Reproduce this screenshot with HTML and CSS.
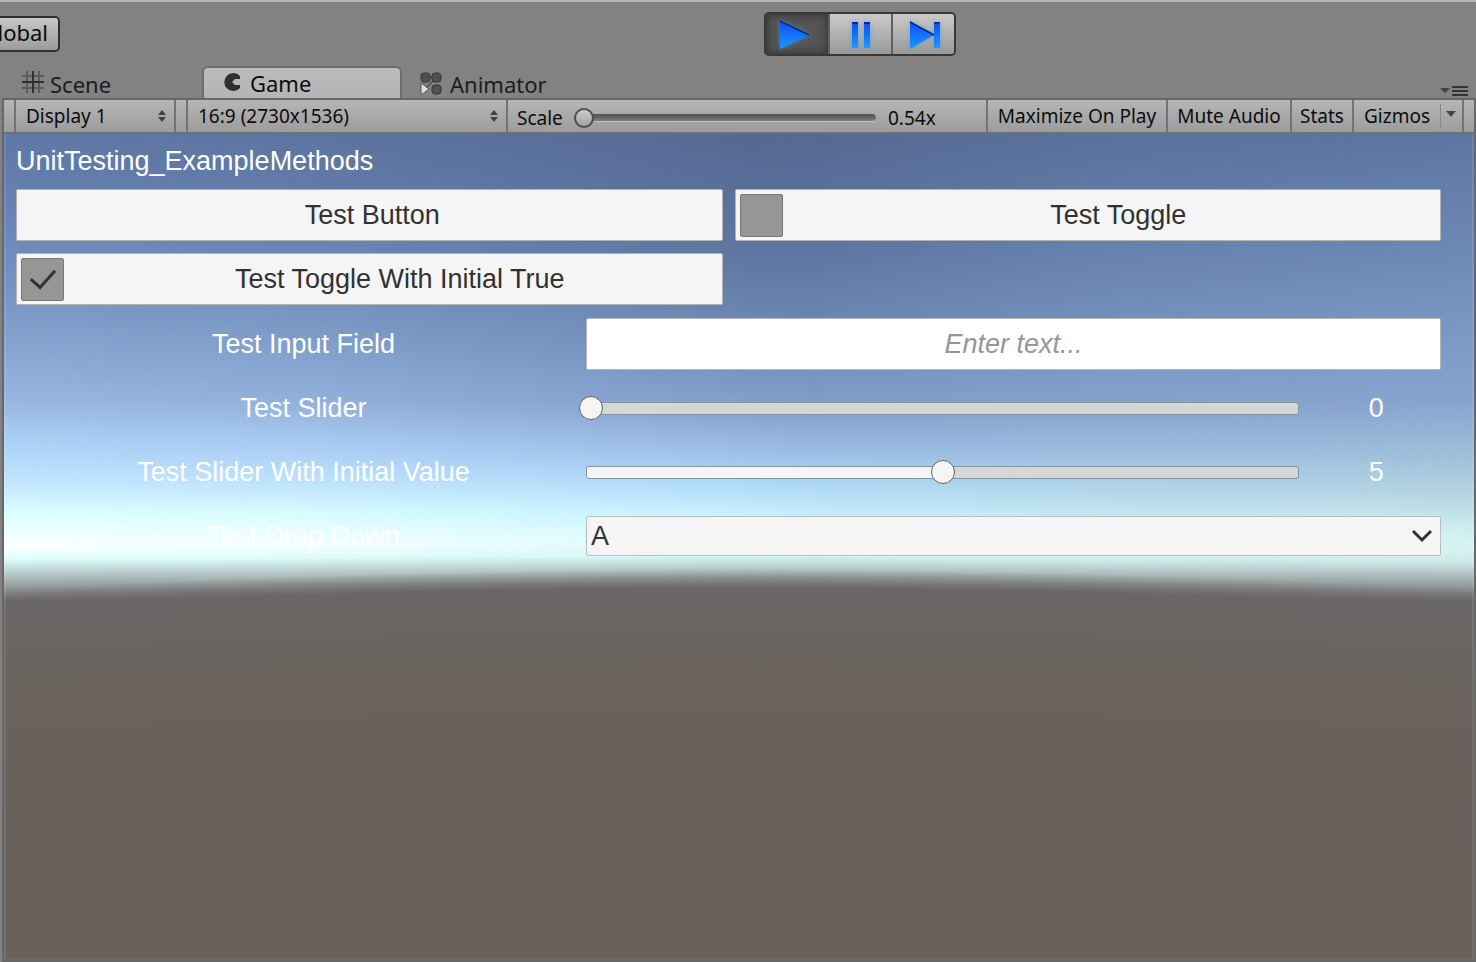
FILE: index.html
```html
<!DOCTYPE html>
<html lang="en">
<head>
<meta charset="utf-8">
<title>UnitTesting_ExampleMethods</title>
<link rel="stylesheet" href="styles.css">
</head>
<body>
<div class="editor">
  <header class="main-bar">
    <button class="pivot" type="button">Global</button>
    <div class="playback">
      <button class="play-btn is-on" type="button" aria-label="Play">
        <svg width="38" height="34" viewBox="0 0 38 34"><defs><linearGradient id="blue" x1="0" y1="0" x2="0" y2="1"><stop offset="0" stop-color="#0a4df0"/><stop offset="1" stop-color="#1a9aff"/></linearGradient></defs><path d="M2 4 31 18 2 32z" fill="url(#blue)"/><path d="M2 4 31 18" stroke="#0a2a80" stroke-width="1.5"/></svg>
      </button>
      <button class="play-btn" type="button" aria-label="Pause">
        <svg width="38" height="34" viewBox="0 0 38 34"><path d="M10 5h6v26h-6zM22 5h6v26h-6z" fill="url(#blue)"/><path d="M10 6h6M22 6h6" stroke="#0a2a80" stroke-width="2"/></svg>
      </button>
      <button class="play-btn" type="button" aria-label="Step">
        <svg width="38" height="34" viewBox="0 0 38 34"><path d="M5 4 29 18 5 32zM29 5h6v26h-6z" fill="url(#blue)"/><path d="M5 5 29 18M29 6h6" stroke="#0a2a80" stroke-width="1.5"/></svg>
      </button>
    </div>
  </header>

  <nav class="tabs">
    <button class="tab tab-scene" type="button">
      <svg width="22" height="22" viewBox="0 0 22 22" fill="none" stroke-width="2"><path d="M5 0v22M17 0v22M0 5h22M0 17h22" stroke="#5c5c5c"/><path d="M11 0v22M0 11h22" stroke="#303030"/></svg>
      Scene
    </button>
    <button class="tab tab-game" type="button">
      <svg width="18" height="18" viewBox="0 0 18 18"><path d="M16 3A9 9 0 1 0 16 15V12H11L8 9 11 6h5z" fill="#303030"/></svg>
      Game
    </button>
    <button class="tab tab-animator" type="button">
      <svg width="22" height="24" viewBox="0 0 22 24"><path d="M5 5h12M17 5 5 17" stroke="#5c5c5c" stroke-width="2"/><g fill="#505050" stroke="#333" stroke-width="1"><rect x="1" y="1" width="9" height="9" rx="3"/><rect x="12" y="1" width="9" height="9" rx="3"/><rect x="12" y="13" width="9" height="9" rx="3"/></g><path d="M1 11 9 17 1 23z" fill="#e0e0e0" stroke="#555"/></svg>
      Animator
    </button>
    <button class="tab-menu" type="button" aria-label="Tab menu">
      <svg width="28" height="12" viewBox="0 0 28 12"><path d="M0 3h10L5 8z" fill="#404040"/><path d="M12 2h16M12 6h16M12 10h16" stroke="#333" stroke-width="2"/></svg>
    </button>
  </nav>

  <main class="panel">
    <div class="view-bar">
      <div class="edge"></div>
      <label class="pick pick-display">
        <select aria-label="Display"><option>Display 1</option></select>
        <svg width="10" height="14" viewBox="0 0 10 14"><path d="M1 6 5 1l4 5zM1 8h8l-4 5z" fill="#444"/></svg>
      </label>
      <div class="edge"></div>
      <label class="pick pick-aspect">
        <select aria-label="Aspect"><option>16:9 (2730x1536)</option></select>
        <svg width="10" height="14" viewBox="0 0 10 14"><path d="M1 6 5 1l4 5zM1 8h8l-4 5z" fill="#444"/></svg>
      </label>
      <div class="scale">
        <label for="scale">Scale</label>
        <input id="scale" type="range" min="0" max="100" value="0">
        <output for="scale">0.54x</output>
      </div>
      <button class="bar-btn bar-max" type="button">Maximize On Play</button>
      <button class="bar-btn bar-mute" type="button">Mute Audio</button>
      <button class="bar-btn bar-stats" type="button">Stats</button>
      <button class="bar-btn bar-gizmos" type="button">Gizmos</button>
      <button class="bar-more" type="button" aria-label="Gizmo options"><svg width="10" height="7" viewBox="0 0 10 7"><path d="M0 0h10L5 6z" fill="#444"/></svg></button>
      <div class="edge"></div>
    </div>

    <section class="view">
      <div class="sky sky-mid"></div>
      <div class="sky sky-left"></div>
      <div class="sky sky-right"></div>
      <div class="sky ground"></div>
      <div class="form">
        <h1 class="title">UnitTesting_ExampleMethods</h1>
        <div class="buttons">
          <button class="tile tile-button" type="button">Test Button</button>
          <label class="tile"><input class="check" type="checkbox"><span>Test Toggle</span></label>
          <label class="tile"><input class="check" type="checkbox" checked><span>Test Toggle With Initial True</span></label>
        </div>
        <div class="fields">
          <label class="name" for="text">Test Input Field</label>
          <input class="text" id="text" type="text" placeholder="Enter text...">
          <label class="name" for="s0">Test Slider</label>
          <div class="slide">
            <div class="track"><input id="s0" type="range" min="0" max="10" value="0"></div>
            <output for="s0">0</output>
          </div>
          <label class="name" for="s5">Test Slider With Initial Value</label>
          <div class="slide">
            <div class="track" style="--fill:50%"><input id="s5" type="range" min="0" max="10" value="5"></div>
            <output for="s5">5</output>
          </div>
          <label class="name" for="drop">Test Drop Down</label>
          <div class="drop">
            <select id="drop"><option>A</option></select>
            <svg width="22" height="14" viewBox="0 0 22 14"><path d="M2 2 11 11 20 2" fill="none" stroke="#323232" stroke-width="3"/></svg>
          </div>
        </div>
      </div>
    </section>
  </main>
</div>
</body>
</html>
```
FILE: styles.css
```css
* { box-sizing: border-box; }
html, body { height: 100%; margin: 0; overflow: hidden; }
body { background: #828282; color: #0c0c0c; font-family: "Noto Sans", sans-serif; }
button, select, input { font: inherit; color: inherit; margin: 0; }
button { border: 0; background: none; padding: 0; }
svg { display: block; flex: none; }

.editor { display: flex; flex-direction: column; min-height: 100%; border-top: 2px solid #b4b4b4; }

.main-bar { display: flex; align-items: flex-start; height: 64px; padding-top: 10px; }
.pivot {
  width: 100px; height: 36px; margin: 4px 0 0 -40px; padding: 0 10px 4px 0; text-align: right;
  font-size: 22px; line-height: 28px; border: 2px solid #303030; border-radius: 5px;
  background: linear-gradient(#c8c8c8, #9c9c9c);
}
.playback {
  display: flex; width: 192px; height: 44px; margin-left: 704px;
  border: 2px solid #383838; border-radius: 5px; overflow: hidden;
}
.play-btn {
  flex: 1; display: grid; place-items: center;
  background: linear-gradient(#cacaca, #999);
}
.play-btn + .play-btn { border-left: 2px solid #606060; }
.play-btn.is-on { flex: 0 0 62px; background: #555; box-shadow: inset 0 0 8px 1px #333; }
.play-btn svg { filter: drop-shadow(0 0 2px #4aa0e0aa); }

.tabs { display: flex; align-items: flex-end; height: 32px; font-size: 22px; line-height: 30px; }
.tab { display: flex; align-items: center; gap: 6px; height: 32px; padding-top: 3px; color: #1c1c1c; }
.tab svg { margin-bottom: 3px; }
.tab-scene { width: 202px; padding-left: 22px; }
.tab-game {
  gap: 8px; width: 200px; padding: 0 0 0 20px; color: #0c0c0c;
  border: 2px solid #6c6c6c; border-bottom: 0; border-radius: 6px 6px 0 0;
  background: linear-gradient(#bcbcbc, #b4b4b4);
}
.tab-animator { gap: 8px; padding-left: 18px; }
.tab-animator svg { margin-bottom: 0; }
.tab-menu { margin: 0 8px 1px auto; }

.panel {
  flex: 1; display: flex; flex-direction: column; margin-left: 2px;
  border: 2px solid #686868; font-size: 19px;
}
.view-bar {
  display: flex; height: 34px; line-height: 32px; border-bottom: 2px solid #707070;
  background: linear-gradient(#b6b6b6, #9c9c9c);
}
.edge { width: 12px; border-right: 2px solid #747474; }
.edge:last-child { border: 0; width: 10px; }
.pick { display: flex; align-items: center; border-right: 2px solid #747474; }
.pick select { flex: 1; min-width: 0; height: 32px; padding: 0 0 0 10px; border: 0; background: none; appearance: none; }
.pick-display { width: 160px; padding-right: 7px; }
.pick-aspect { width: 320px; padding-right: 7px; }
.scale { flex: 1; display: flex; align-items: center; padding: 4px 0 0 9px; }
.scale label { width: 57px; }
.scale input { appearance: none; width: 302px; height: 24px; margin-right: 12px; background: none; }
.scale input::-webkit-slider-runnable-track {
  height: 8px; border-radius: 4px; border-bottom: 1px solid #c0c0c0;
  background: linear-gradient(#505050, #7c7c7c);
}
.scale input::-webkit-slider-thumb {
  appearance: none; width: 20px; height: 20px; margin-top: -6px; border: 2px solid #4c4c4c;
  border-radius: 50%; background: linear-gradient(#ccc, #a0a0a0);
}
.bar-btn { border-left: 2px solid #747474; }
.bar-max { width: 180px; }
.bar-mute { width: 124px; }
.bar-stats { width: 62px; }
.bar-gizmos { width: 88px; }
.bar-more {
  width: 24px; display: grid; place-items: center; padding-bottom: 4px; border-right: 2px solid #747474;
  background: linear-gradient(#888, #888) 0 50% / 1px 24px no-repeat;
}

.view { flex: 1; position: relative; overflow: hidden; }
.sky { position: absolute; inset: 0; }
.sky-mid {
  background: linear-gradient(#54688f 0, #5c739e 116px, #6581ab 170px, #7693c0 238px, #84a0cd 278px,
    #9cbde7 318px, #b2dcf9 354px, #c5efff 380px, #d8fafc 406px, #d4f4f4 422px, #6b6666 462px);
}
.sky-left {
  background: linear-gradient(#5f78a4 0, #6680b0 66px, #7393c2 146px, #7e9cc9 186px, #96b5e0 266px,
    #abcff3 306px, #c0e4ff 346px, #dcffff 380px, #fcffff 412px, #e0ffff 424px, #6b6666 468px);
  mask-image: linear-gradient(90deg, #000 0, #000c 20%, #0007 35%, #0000 56%);
}
.sky-right {
  background: linear-gradient(#5d76a1 0, #6c89b5 116px, #7b9ac5 206px, #86a3ce 266px, #9bbcd9 316px,
    #b8d8e4 366px, #cdeeef 396px, #d6f4f4 414px, #cfe8e8 428px, #6b6666 468px);
  mask-image: linear-gradient(90deg, #0000 50%, #000a 75%, #000 100%);
}
.ground {
  background: radial-gradient(13500px 13500px at 50% 13951px, #69615a 13200px, #69635d 13420px,
    #6b6666 13496px, #6b666680 13504px, #6b666600 13516px);
}
.sky-mid, .ground { box-shadow: inset 0 -2px #7a736e55, inset 2px 0 #ffffff18, inset -2px 0 #ffffff18; }

.form {
  position: relative; padding: 11px 33px 20px 12px; color: #fff;
  font-family: "Liberation Sans", sans-serif; font-size: 27px; line-height: 32px;
}
.title { margin: 0 0 12px; font-size: 27px; font-weight: 400; line-height: 32px; }
.buttons { display: grid; grid-template-columns: 1fr 1fr; gap: 12px; margin-bottom: 13px; }
.tile {
  display: flex; align-items: center; justify-content: center; height: 52px; padding: 0 4px;
  color: #323232; background: #f5f5f5; border: 1px solid #b4b4b4; border-radius: 2px;
}
.tile-button { padding-left: 10px; }
.tile span { flex: 1; text-align: center; padding-left: 18px; }
.check {
  appearance: none; flex: none; width: 43px; height: 43px;
  background: #969696; border: 1px solid #787878; border-radius: 2px; display: grid; place-items: center;
}
.check:checked::before {
  content: ""; width: 11px; height: 21px; margin-bottom: 6px;
  border: solid #323232; border-width: 0 3px 3px 0; transform: rotate(42deg);
}
.fields { display: grid; grid-template-columns: 2fr 3fr; row-gap: 12px; }
.name { display: grid; place-items: center; height: 52px; padding-left: 5px; }
.text {
  width: 100%; height: 52px; text-align: center; color: #323232;
  background: #fff; border: 1px solid #b4b4b4; border-radius: 2px;
}
.text::placeholder { color: #969696; font-style: italic; opacity: 1; }
.slide { display: grid; grid-template-columns: 11fr 2fr; column-gap: 12px; align-items: center; }
.slide output { text-align: center; }
.track {
  display: flex; align-items: center; height: 13px; border: 1px solid #8794a0; border-radius: 3px;
  background: linear-gradient(90deg, #f5f5f5 var(--fill, 0%), #d6d6d6 var(--fill, 0%));
}
.track input { appearance: none; flex: 1; height: 24px; margin: 0 -8px; background: none; }
.track input::-webkit-slider-thumb {
  appearance: none; width: 24px; height: 24px; border: 1px solid #606468; border-radius: 50%; background: #f5f5f5;
}
.drop { display: flex; align-items: center; position: relative; }
.drop select {
  flex: 1; height: 40px; padding: 0 4px; color: #323232; background: #f5f5f5;
  border: 1px solid #b4c0c0; border-radius: 2px; appearance: none;
}
.drop svg { position: absolute; right: 8px; pointer-events: none; }
```
